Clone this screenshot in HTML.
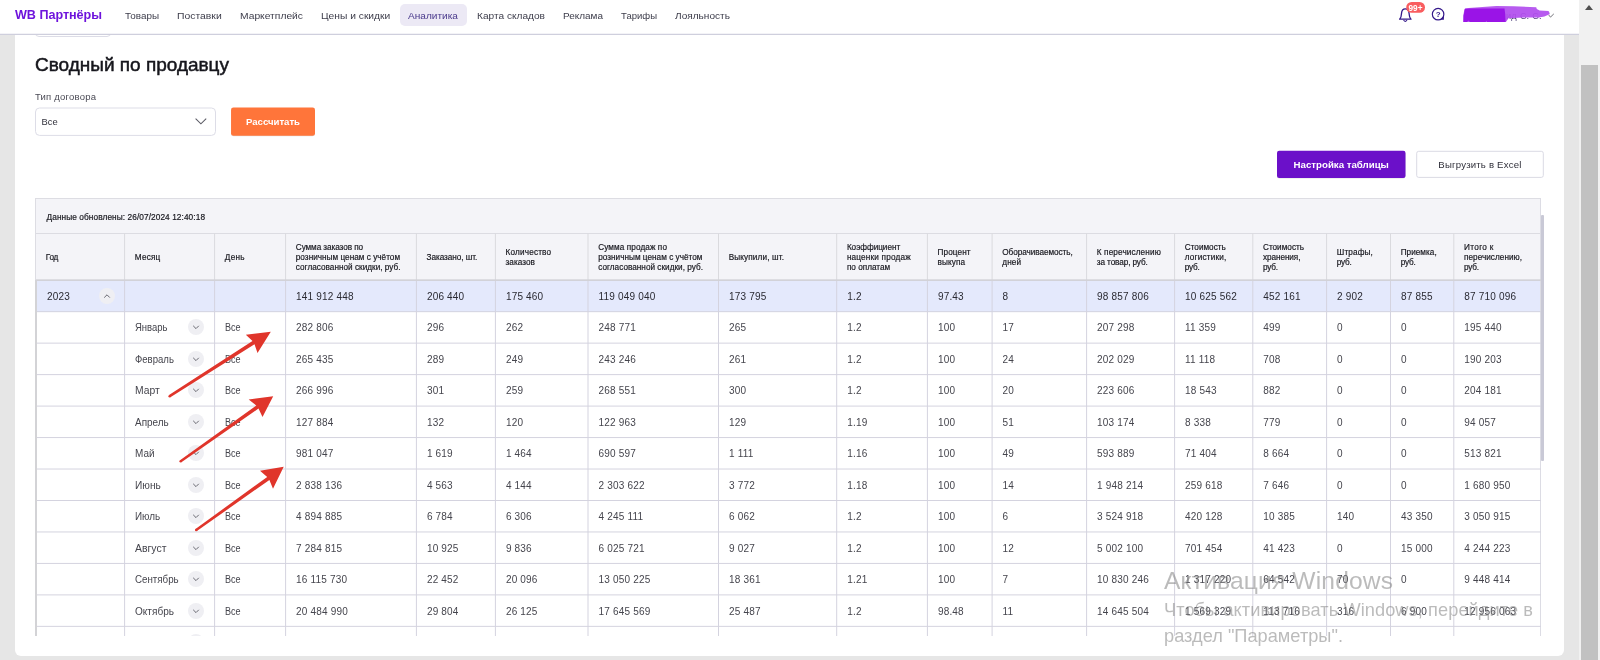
<!DOCTYPE html>
<html><head><meta charset="utf-8"><title>WB</title>
<style>
*{box-sizing:border-box;margin:0;padding:0}
html,body{width:1600px;height:660px;overflow:hidden;background:#e6e6e6;font-family:"Liberation Sans",sans-serif;}
.abs{position:absolute}
#root{position:absolute;left:0;top:0;width:1600px;height:660px;overflow:hidden;will-change:transform}
#hdr{position:absolute;left:0;top:0;width:1579px;height:34px;background:#fff;z-index:5}
#card{position:absolute;left:15px;top:34px;width:1549px;height:621.5px;background:#fff;border-radius:0 0 6px 6px}
#sb{position:absolute;left:1579px;top:0;width:21px;height:660px;background:#f1f1f1}
#sb .thumb{position:absolute;left:2px;top:65px;width:17px;height:595px;background:#c1c1c1}
#sb .up{position:absolute;left:5.6px;top:5.3px;width:0;height:0;border-left:4.9px solid transparent;border-right:4.9px solid transparent;border-bottom:5.2px solid #505050}
.nav{position:absolute;top:9.9px;font-size:9.3px;color:#3c3c4a;white-space:nowrap;line-height:12px}
.logo{position:absolute;left:15px;top:7.5px;font-size:12.6px;font-weight:bold;color:#6e13dc;white-space:nowrap;line-height:15px}
.pill{position:absolute;left:400px;top:4px;width:67px;height:22px;border-radius:5px;background:#ece9f5}
h1{position:absolute;left:35px;top:52.5px;font-size:19px;font-weight:normal;color:#16161c;white-space:nowrap;line-height:24px;-webkit-text-stroke:0.5px #16161c}
.lbl{position:absolute;left:35px;top:91.4px;font-size:9.5px;color:#4a4a55;line-height:11px;white-space:nowrap}
.sel{position:absolute;left:35px;top:107.5px;width:181px;height:28.3px}
.sel span.v{position:absolute;left:6.6px;top:8.4px;font-size:9.4px;line-height:11px;color:#33333d}
.btn-o{position:absolute;left:231px;top:107.5px;width:84px;height:28.3px;color:#fff;font-weight:bold;font-size:9.6px;text-align:center;line-height:28.8px;white-space:nowrap}
.btn-p{position:absolute;left:1277px;top:150.8px;width:128.5px;height:27.1px;color:#fff;font-weight:bold;font-size:9.7px;text-align:center;line-height:27.6px;white-space:nowrap}
.btn-w{position:absolute;left:1416.2px;top:150.8px;width:127.5px;height:27.1px;color:#30303a;font-size:9.6px;text-align:center;line-height:27.1px;white-space:nowrap}
#tbl{position:absolute;left:0;top:0;width:1600px;height:635.5px;overflow:hidden}
.topbar{position:absolute;left:35px;top:198px;width:1506px;height:35.5px;background:#f4f4f8;border:1px solid #dddde3;border-bottom:none}
.topbar div{position:absolute;left:10.5px;top:12.5px;font-size:8.3px;line-height:10px;color:#17171e;-webkit-text-stroke:0.18px #17171e;white-space:nowrap}
.thead{position:absolute;left:35px;top:233px;width:1506px;height:46.3px;background:#f4f4f8;border-top:1px solid #dcdce2;border-left:1px solid #dddde3;border-bottom:none}
.th{position:absolute;font-size:8.2px;line-height:10px;color:#17171e;-webkit-text-stroke:0.18px #17171e;white-space:nowrap}
.vl{position:absolute;width:1px;background:#d6d6e4}
.hl{position:absolute;height:1px;left:37px;width:1504px;background:#d6d6e4}
.c{position:absolute;font-size:10px;letter-spacing:0.19px;line-height:12px;color:#45454d;white-space:nowrap}
.c.b{color:#2a2a32}
.c.m{letter-spacing:0}
.sx{display:inline-block;transform-origin:0 50%}
.circ{position:absolute;width:16px;height:16px;border-radius:8px;background:#efeff3}
.circ svg{position:absolute;left:0;top:0}
</style></head><body><div id="root">

<div id="hdr">
<div class="logo"><span class="ls" style="letter-spacing:-0.030px">WB Партнёры</span></div>
<div class="pill"></div>
<div class="nav" style="left:125px;"><span class="sx" style="transform:scaleX(1.0630)">Товары</span></div>
<div class="nav" style="left:177px;"><span class="sx" style="transform:scaleX(1.1166)">Поставки</span></div>
<div class="nav" style="left:239.5px;"><span class="sx" style="transform:scaleX(1.1062)">Маркетплейс</span></div>
<div class="nav" style="left:320.7px;"><span class="sx" style="transform:scaleX(1.1030)">Цены и скидки</span></div>
<div class="nav" style="left:408px;color:#4a3a8c;"><span class="sx" style="transform:scaleX(1.0862)">Аналитика</span></div>
<div class="nav" style="left:477px;"><span class="sx" style="transform:scaleX(1.0894)">Карта складов</span></div>
<div class="nav" style="left:563px;"><span class="sx" style="transform:scaleX(1.0725)">Реклама</span></div>
<div class="nav" style="left:621px;"><span class="sx" style="transform:scaleX(1.0245)">Тарифы</span></div>
<div class="nav" style="left:675px;"><span class="sx" style="transform:scaleX(1.0861)">Лояльность</span></div>
<svg class="abs" style="left:1395px;top:0" width="184" height="34" viewBox="1395 0 184 34">
<path d="M1399.6 19.2 C1401.4 17.6 1401.4 15.5 1401.5 13.4 C1401.7 10.4 1403.2 8.9 1405.3 8.9 C1407.4 8.9 1408.9 10.4 1409.1 13.4 C1409.2 15.5 1409.2 17.6 1411 19.2 Z" fill="none" stroke="#34188a" stroke-width="1.3" stroke-linejoin="round"/>
<path d="M1403.9 20.5 Q1405.3 22.3 1406.7 20.5" fill="none" stroke="#34188a" stroke-width="1.2" stroke-linecap="round"/>
<rect x="1406.2" y="1.9" width="18.8" height="10.9" rx="5.4" fill="#f95d5f"/>
<text x="1408.5" y="10.6" font-family="Liberation Sans, sans-serif" font-weight="bold" font-size="8.8" fill="#fff" textLength="14" lengthAdjust="spacingAndGlyphs">99+</text>
<circle cx="1438.1" cy="14.2" r="5.75" fill="none" stroke="#34188a" stroke-width="1.2"/>
<path d="M1443.9 19.8 L1443.9 16.2 L1440.3 19.8 Z" fill="#34188a"/>
<text x="1438.2" y="17.2" font-family="Liberation Sans, sans-serif" font-weight="bold" font-size="8" fill="#34188a" text-anchor="middle">?</text>
<g font-family="Liberation Sans, sans-serif" font-size="9.2" fill="#4a3d78"><text x="1516.6" y="18.9" text-anchor="end">ид</text><text x="1519.9" y="18.9">С.</text><text x="1532.3" y="18.9">С.</text></g>
<path d="M1463.3 21.9 L1463.3 15.8 L1464.3 9.6 L1465.3 8.2 L1479 7.2 L1496.3 6.1 L1513.5 6.3 L1536.2 7.2 L1536.8 8.9 L1539.6 10.6 L1548.5 10.9 L1549.6 13 L1549.6 14.2 L1544.4 16.6 L1538.9 17.6 L1524 17.4 L1508.5 18.2 L1507 20.5 L1505.9 21.9 Z" fill="#b24fee" fill-opacity="0.93"/>
<path d="M1463.4 21.9 L1463.6 15.5 L1465 9 L1470 8.6 L1504.5 8.6 L1505.2 14 L1505.6 21.9 L1487 21.9 L1486.4 20.8 L1485.6 21.9 L1470 22 L1468.5 20.4 L1467 22 Z" fill="#9a14e7"/>
<path d="M1548.8 15.1 L1550.5 17.1 L1553.8 13.9" fill="none" stroke="#6a6a72" stroke-width="0.95"/>
</svg>
<svg class="abs" style="left:0;top:30px" width="1579" height="6"><line x1="0" y1="4.4" x2="1579" y2="4.4" stroke="#cfcfdd" stroke-width="1.25"/></svg>
</div>
<div id="card"></div>
<div id="sb"><div class="up"></div><div class="thumb"></div></div>
<div class="abs" style="left:35px;top:20px;width:76px;height:17px;border:1px solid #dcdce6;border-radius:4px;z-index:1"></div>
<svg class="abs" style="left:0;top:100px" width="1579" height="90" viewBox="0 100 1579 90"><rect x="35.5" y="108" width="180" height="27.4" rx="4" fill="#fff" stroke="#dddde7" stroke-width="1"/><rect x="231.05" y="108.1" width="83.95" height="28.1" rx="2.4" fill="#000" fill-opacity="0.13"/><rect x="231.05" y="107.5" width="83.95" height="28.3" rx="2.4" fill="#ff753a"/><rect x="1277" y="151.3" width="128.5" height="27.1" rx="2.2" fill="#000" fill-opacity="0.13"/><rect x="1277" y="150.8" width="128.5" height="27.1" rx="2.2" fill="#6b10c9"/><rect x="1416.7" y="151.3" width="126.6" height="26.1" rx="2" fill="#fff" stroke="#dadae4" stroke-width="1"/></svg>
<h1><span class="ls" style="letter-spacing:-0.009px">Сводный по продавцу</span></h1>
<div class="lbl"><span class="ls" style="letter-spacing:0.214px">Тип договора</span></div>
<div class="sel"><span class="v">Все</span><svg class="abs" style="left:159px;top:9.6px" width="14" height="9" viewBox="0 0 14 9"><path d="M1.6 1.6 L6.9 6.8 L12.2 1.6" fill="none" stroke="#5a5a64" stroke-width="1.05"/></svg></div>
<div class="btn-o"><span class="ls" style="letter-spacing:-0.016px">Рассчитать</span></div>
<div class="btn-p"><span class="ls" style="letter-spacing:-0.010px">Настройка таблицы</span></div>
<div class="btn-w"><span class="ls" style="letter-spacing:0.196px">Выгрузить в Excel</span></div>
<div id="tbl">
<div class="topbar"><div><span class="ls" style="letter-spacing:0.075px">Данные обновлены: 26/07/2024 12:40:18</span></div></div>
<div class="thead"></div>
<div class="abs" style="left:37px;top:280.5px;width:1504px;height:31.17px;background:#e4e9fc"></div>
<div class="abs" style="left:35px;top:280px;width:2px;height:360px;background:#d3d3d6"></div>
<svg class="abs" style="left:0;top:0" width="1600" height="660"><line x1="124.6" y1="233.5" x2="124.6" y2="280" stroke="#dadade" stroke-width="1"/><line x1="124.6" y1="281" x2="124.6" y2="640" stroke="#d4d3df" stroke-width="1"/><line x1="214.6" y1="233.5" x2="214.6" y2="280" stroke="#dadade" stroke-width="1"/><line x1="214.6" y1="281" x2="214.6" y2="640" stroke="#d4d3df" stroke-width="1"/><line x1="285.6" y1="233.5" x2="285.6" y2="280" stroke="#dadade" stroke-width="1"/><line x1="285.6" y1="281" x2="285.6" y2="640" stroke="#d4d3df" stroke-width="1"/><line x1="416.4" y1="233.5" x2="416.4" y2="280" stroke="#dadade" stroke-width="1"/><line x1="416.4" y1="281" x2="416.4" y2="640" stroke="#d4d3df" stroke-width="1"/><line x1="495.4" y1="233.5" x2="495.4" y2="280" stroke="#dadade" stroke-width="1"/><line x1="495.4" y1="281" x2="495.4" y2="640" stroke="#d4d3df" stroke-width="1"/><line x1="588" y1="233.5" x2="588" y2="280" stroke="#dadade" stroke-width="1"/><line x1="588" y1="281" x2="588" y2="640" stroke="#d4d3df" stroke-width="1"/><line x1="718.5" y1="233.5" x2="718.5" y2="280" stroke="#dadade" stroke-width="1"/><line x1="718.5" y1="281" x2="718.5" y2="640" stroke="#d4d3df" stroke-width="1"/><line x1="836.7" y1="233.5" x2="836.7" y2="280" stroke="#dadade" stroke-width="1"/><line x1="836.7" y1="281" x2="836.7" y2="640" stroke="#d4d3df" stroke-width="1"/><line x1="927.4" y1="233.5" x2="927.4" y2="280" stroke="#dadade" stroke-width="1"/><line x1="927.4" y1="281" x2="927.4" y2="640" stroke="#d4d3df" stroke-width="1"/><line x1="992.1" y1="233.5" x2="992.1" y2="280" stroke="#dadade" stroke-width="1"/><line x1="992.1" y1="281" x2="992.1" y2="640" stroke="#d4d3df" stroke-width="1"/><line x1="1086.6" y1="233.5" x2="1086.6" y2="280" stroke="#dadade" stroke-width="1"/><line x1="1086.6" y1="281" x2="1086.6" y2="640" stroke="#d4d3df" stroke-width="1"/><line x1="1174.6" y1="233.5" x2="1174.6" y2="280" stroke="#dadade" stroke-width="1"/><line x1="1174.6" y1="281" x2="1174.6" y2="640" stroke="#d4d3df" stroke-width="1"/><line x1="1252.8" y1="233.5" x2="1252.8" y2="280" stroke="#dadade" stroke-width="1"/><line x1="1252.8" y1="281" x2="1252.8" y2="640" stroke="#d4d3df" stroke-width="1"/><line x1="1326.6" y1="233.5" x2="1326.6" y2="280" stroke="#dadade" stroke-width="1"/><line x1="1326.6" y1="281" x2="1326.6" y2="640" stroke="#d4d3df" stroke-width="1"/><line x1="1390.5" y1="233.5" x2="1390.5" y2="280" stroke="#dadade" stroke-width="1"/><line x1="1390.5" y1="281" x2="1390.5" y2="640" stroke="#d4d3df" stroke-width="1"/><line x1="1453.8" y1="233.5" x2="1453.8" y2="280" stroke="#dadade" stroke-width="1"/><line x1="1453.8" y1="281" x2="1453.8" y2="640" stroke="#d4d3df" stroke-width="1"/><line x1="1540.5" y1="198" x2="1540.5" y2="640" stroke="#dcdce4" stroke-width="1"/><line x1="37" y1="311.67" x2="1541" y2="311.67" stroke="#d4d3df" stroke-width="1"/><line x1="37" y1="343.14" x2="1541" y2="343.14" stroke="#d4d3df" stroke-width="1"/><line x1="37" y1="374.61" x2="1541" y2="374.61" stroke="#d4d3df" stroke-width="1"/><line x1="37" y1="406.08" x2="1541" y2="406.08" stroke="#d4d3df" stroke-width="1"/><line x1="37" y1="437.55" x2="1541" y2="437.55" stroke="#d4d3df" stroke-width="1"/><line x1="37" y1="469.02" x2="1541" y2="469.02" stroke="#d4d3df" stroke-width="1"/><line x1="37" y1="500.49" x2="1541" y2="500.49" stroke="#d4d3df" stroke-width="1"/><line x1="37" y1="531.96" x2="1541" y2="531.96" stroke="#d4d3df" stroke-width="1"/><line x1="37" y1="563.43" x2="1541" y2="563.43" stroke="#d4d3df" stroke-width="1"/><line x1="37" y1="594.9" x2="1541" y2="594.9" stroke="#d4d3df" stroke-width="1"/><line x1="37" y1="626.37" x2="1541" y2="626.37" stroke="#d4d3df" stroke-width="1"/><line x1="35" y1="280.1" x2="1541" y2="280.1" stroke="#d2d2d8" stroke-width="1.7"/></svg>
<div class="th" style="left:45.8px;top:252.7px"><span class="ls" style="letter-spacing:-0.273px">Год</span></div>
<div class="th" style="left:134.8px;top:252.7px"><span class="ls" style="letter-spacing:0.203px">Месяц</span></div>
<div class="th" style="left:224.8px;top:252.7px"><span class="ls" style="letter-spacing:0.286px">День</span></div>
<div class="th" style="left:295.8px;top:242.7px"><span class="ls" style="letter-spacing:-0.074px">Сумма заказов по</span><br><span class="ls" style="letter-spacing:0.024px">розничным ценам с учётом</span><br><span class="ls" style="letter-spacing:0.021px">согласованной скидки, руб.</span></div>
<div class="th" style="left:426.6px;top:252.7px"><span class="ls" style="letter-spacing:-0.049px">Заказано, шт.</span></div>
<div class="th" style="left:505.6px;top:247.7px"><span class="ls" style="letter-spacing:0.170px">Количество</span><br><span class="ls" style="letter-spacing:0.023px">заказов</span></div>
<div class="th" style="left:598.2px;top:242.7px"><span class="ls" style="letter-spacing:0.094px">Сумма продаж по</span><br><span class="ls" style="letter-spacing:0.024px">розничным ценам с учётом</span><br><span class="ls" style="letter-spacing:0.021px">согласованной скидки, руб.</span></div>
<div class="th" style="left:728.7px;top:252.7px"><span class="ls" style="letter-spacing:0.128px">Выкупили, шт.</span></div>
<div class="th" style="left:846.9px;top:242.7px"><span class="ls" style="letter-spacing:-0.039px">Коэффициент</span><br><span class="ls" style="letter-spacing:0.184px">наценки продаж</span><br><span class="ls" style="letter-spacing:0.000px">по оплатам</span></div>
<div class="th" style="left:937.6px;top:247.7px"><span class="ls" style="letter-spacing:0.096px">Процент</span><br><span class="ls" style="letter-spacing:0.100px">выкупа</span></div>
<div class="th" style="left:1002.3px;top:247.7px"><span class="ls" style="letter-spacing:-0.054px">Оборачиваемость,</span><br><span class="ls" style="letter-spacing:0.104px">дней</span></div>
<div class="th" style="left:1096.8px;top:247.7px"><span class="ls" style="letter-spacing:0.125px">К перечислению</span><br><span class="ls" style="letter-spacing:-0.102px">за товар, руб.</span></div>
<div class="th" style="left:1184.8px;top:242.7px"><span class="ls" style="letter-spacing:0.000px">Стоимость</span><br><span class="ls" style="letter-spacing:0.173px">логистики,</span><br><span class="ls" style="letter-spacing:-0.208px">руб.</span></div>
<div class="th" style="left:1263px;top:242.7px"><span class="ls" style="letter-spacing:0.000px">Стоимость</span><br><span class="ls" style="letter-spacing:-0.074px">хранения,</span><br><span class="ls" style="letter-spacing:-0.208px">руб.</span></div>
<div class="th" style="left:1336.8px;top:247.7px"><span class="ls" style="letter-spacing:0.122px">Штрафы,</span><br><span class="ls" style="letter-spacing:-0.208px">руб.</span></div>
<div class="th" style="left:1400.7px;top:247.7px"><span class="ls" style="letter-spacing:0.029px">Приемка,</span><br><span class="ls" style="letter-spacing:-0.208px">руб.</span></div>
<div class="th" style="left:1464px;top:242.7px"><span class="ls" style="letter-spacing:0.345px">Итого к</span><br><span class="ls" style="letter-spacing:0.033px">перечислению,</span><br><span class="ls" style="letter-spacing:-0.208px">руб.</span></div>
<div class="c b" style="left:46.9px;top:290.835px">2023</div>
<div class="c b" style="left:296.1px;top:290.835px">141 912 448</div>
<div class="c b" style="left:426.9px;top:290.835px">206 440</div>
<div class="c b" style="left:505.9px;top:290.835px">175 460</div>
<div class="c b" style="left:598.5px;top:290.835px">119 049 040</div>
<div class="c b" style="left:729px;top:290.835px">173 795</div>
<div class="c b" style="left:847.2px;top:290.835px">1.2</div>
<div class="c b" style="left:937.9px;top:290.835px">97.43</div>
<div class="c b" style="left:1002.6px;top:290.835px">8</div>
<div class="c b" style="left:1097.1px;top:290.835px">98 857 806</div>
<div class="c b" style="left:1185.1px;top:290.835px">10 625 562</div>
<div class="c b" style="left:1263.3px;top:290.835px">452 161</div>
<div class="c b" style="left:1337.1px;top:290.835px">2 902</div>
<div class="c b" style="left:1401px;top:290.835px">87 855</div>
<div class="c b" style="left:1464.3px;top:290.835px">87 710 096</div>
<div class="circ" style="left:98.9px;top:287.935px"><svg width="16" height="16"><path d="M5.2 9.6 L8 6.8 L10.8 9.6" fill="none" stroke="#62626a" stroke-width="0.95"/></svg></div>
<div class="c m" style="left:135.1px;top:322.305px"><span class="sx" style="transform:scaleX(0.9480)">Январь</span></div>
<div class="c m" style="left:225.1px;top:322.305px"><span class="sx" style="transform:scaleX(0.9052)">Все</span></div>
<div class="c" style="left:296.1px;top:322.305px">282 806</div>
<div class="c" style="left:426.9px;top:322.305px">296</div>
<div class="c" style="left:505.9px;top:322.305px">262</div>
<div class="c" style="left:598.5px;top:322.305px">248 771</div>
<div class="c" style="left:729px;top:322.305px">265</div>
<div class="c" style="left:847.2px;top:322.305px">1.2</div>
<div class="c" style="left:937.9px;top:322.305px">100</div>
<div class="c" style="left:1002.6px;top:322.305px">17</div>
<div class="c" style="left:1097.1px;top:322.305px">207 298</div>
<div class="c" style="left:1185.1px;top:322.305px">11 359</div>
<div class="c" style="left:1263.3px;top:322.305px">499</div>
<div class="c" style="left:1337.1px;top:322.305px">0</div>
<div class="c" style="left:1401px;top:322.305px">0</div>
<div class="c" style="left:1464.3px;top:322.305px">195 440</div>
<div class="circ" style="left:187.9px;top:319.405px"><svg width="16" height="16"><path d="M5.2 6.8 L8 9.6 L10.8 6.8" fill="none" stroke="#62626a" stroke-width="0.95"/></svg></div>
<div class="c m" style="left:135.1px;top:353.775px"><span class="sx" style="transform:scaleX(0.9568)">Февраль</span></div>
<div class="c m" style="left:225.1px;top:353.775px"><span class="sx" style="transform:scaleX(0.9052)">Все</span></div>
<div class="c" style="left:296.1px;top:353.775px">265 435</div>
<div class="c" style="left:426.9px;top:353.775px">289</div>
<div class="c" style="left:505.9px;top:353.775px">249</div>
<div class="c" style="left:598.5px;top:353.775px">243 246</div>
<div class="c" style="left:729px;top:353.775px">261</div>
<div class="c" style="left:847.2px;top:353.775px">1.2</div>
<div class="c" style="left:937.9px;top:353.775px">100</div>
<div class="c" style="left:1002.6px;top:353.775px">24</div>
<div class="c" style="left:1097.1px;top:353.775px">202 029</div>
<div class="c" style="left:1185.1px;top:353.775px">11 118</div>
<div class="c" style="left:1263.3px;top:353.775px">708</div>
<div class="c" style="left:1337.1px;top:353.775px">0</div>
<div class="c" style="left:1401px;top:353.775px">0</div>
<div class="c" style="left:1464.3px;top:353.775px">190 203</div>
<div class="circ" style="left:187.9px;top:350.875px"><svg width="16" height="16"><path d="M5.2 6.8 L8 9.6 L10.8 6.8" fill="none" stroke="#62626a" stroke-width="0.95"/></svg></div>
<div class="c m" style="left:135.1px;top:385.245px"><span class="sx" style="transform:scaleX(1.0319)">Март</span></div>
<div class="c m" style="left:225.1px;top:385.245px"><span class="sx" style="transform:scaleX(0.9052)">Все</span></div>
<div class="c" style="left:296.1px;top:385.245px">266 996</div>
<div class="c" style="left:426.9px;top:385.245px">301</div>
<div class="c" style="left:505.9px;top:385.245px">259</div>
<div class="c" style="left:598.5px;top:385.245px">268 551</div>
<div class="c" style="left:729px;top:385.245px">300</div>
<div class="c" style="left:847.2px;top:385.245px">1.2</div>
<div class="c" style="left:937.9px;top:385.245px">100</div>
<div class="c" style="left:1002.6px;top:385.245px">20</div>
<div class="c" style="left:1097.1px;top:385.245px">223 606</div>
<div class="c" style="left:1185.1px;top:385.245px">18 543</div>
<div class="c" style="left:1263.3px;top:385.245px">882</div>
<div class="c" style="left:1337.1px;top:385.245px">0</div>
<div class="c" style="left:1401px;top:385.245px">0</div>
<div class="c" style="left:1464.3px;top:385.245px">204 181</div>
<div class="circ" style="left:187.9px;top:382.345px"><svg width="16" height="16"><path d="M5.2 6.8 L8 9.6 L10.8 6.8" fill="none" stroke="#62626a" stroke-width="0.95"/></svg></div>
<div class="c m" style="left:135.1px;top:416.715px"><span class="sx" style="transform:scaleX(0.9949)">Апрель</span></div>
<div class="c m" style="left:225.1px;top:416.715px"><span class="sx" style="transform:scaleX(0.9052)">Все</span></div>
<div class="c" style="left:296.1px;top:416.715px">127 884</div>
<div class="c" style="left:426.9px;top:416.715px">132</div>
<div class="c" style="left:505.9px;top:416.715px">120</div>
<div class="c" style="left:598.5px;top:416.715px">122 963</div>
<div class="c" style="left:729px;top:416.715px">129</div>
<div class="c" style="left:847.2px;top:416.715px">1.19</div>
<div class="c" style="left:937.9px;top:416.715px">100</div>
<div class="c" style="left:1002.6px;top:416.715px">51</div>
<div class="c" style="left:1097.1px;top:416.715px">103 174</div>
<div class="c" style="left:1185.1px;top:416.715px">8 338</div>
<div class="c" style="left:1263.3px;top:416.715px">779</div>
<div class="c" style="left:1337.1px;top:416.715px">0</div>
<div class="c" style="left:1401px;top:416.715px">0</div>
<div class="c" style="left:1464.3px;top:416.715px">94 057</div>
<div class="circ" style="left:187.9px;top:413.815px"><svg width="16" height="16"><path d="M5.2 6.8 L8 9.6 L10.8 6.8" fill="none" stroke="#62626a" stroke-width="0.95"/></svg></div>
<div class="c m" style="left:135.1px;top:448.185px"><span class="sx" style="transform:scaleX(0.9952)">Май</span></div>
<div class="c m" style="left:225.1px;top:448.185px"><span class="sx" style="transform:scaleX(0.9052)">Все</span></div>
<div class="c" style="left:296.1px;top:448.185px">981 047</div>
<div class="c" style="left:426.9px;top:448.185px">1 619</div>
<div class="c" style="left:505.9px;top:448.185px">1 464</div>
<div class="c" style="left:598.5px;top:448.185px">690 597</div>
<div class="c" style="left:729px;top:448.185px">1 111</div>
<div class="c" style="left:847.2px;top:448.185px">1.16</div>
<div class="c" style="left:937.9px;top:448.185px">100</div>
<div class="c" style="left:1002.6px;top:448.185px">49</div>
<div class="c" style="left:1097.1px;top:448.185px">593 889</div>
<div class="c" style="left:1185.1px;top:448.185px">71 404</div>
<div class="c" style="left:1263.3px;top:448.185px">8 664</div>
<div class="c" style="left:1337.1px;top:448.185px">0</div>
<div class="c" style="left:1401px;top:448.185px">0</div>
<div class="c" style="left:1464.3px;top:448.185px">513 821</div>
<div class="circ" style="left:187.9px;top:445.285px"><svg width="16" height="16"><path d="M5.2 6.8 L8 9.6 L10.8 6.8" fill="none" stroke="#62626a" stroke-width="0.95"/></svg></div>
<div class="c m" style="left:135.1px;top:479.655px"><span class="sx" style="transform:scaleX(1.0129)">Июнь</span></div>
<div class="c m" style="left:225.1px;top:479.655px"><span class="sx" style="transform:scaleX(0.9052)">Все</span></div>
<div class="c" style="left:296.1px;top:479.655px">2 838 136</div>
<div class="c" style="left:426.9px;top:479.655px">4 563</div>
<div class="c" style="left:505.9px;top:479.655px">4 144</div>
<div class="c" style="left:598.5px;top:479.655px">2 303 622</div>
<div class="c" style="left:729px;top:479.655px">3 772</div>
<div class="c" style="left:847.2px;top:479.655px">1.18</div>
<div class="c" style="left:937.9px;top:479.655px">100</div>
<div class="c" style="left:1002.6px;top:479.655px">14</div>
<div class="c" style="left:1097.1px;top:479.655px">1 948 214</div>
<div class="c" style="left:1185.1px;top:479.655px">259 618</div>
<div class="c" style="left:1263.3px;top:479.655px">7 646</div>
<div class="c" style="left:1337.1px;top:479.655px">0</div>
<div class="c" style="left:1401px;top:479.655px">0</div>
<div class="c" style="left:1464.3px;top:479.655px">1 680 950</div>
<div class="circ" style="left:187.9px;top:476.755px"><svg width="16" height="16"><path d="M5.2 6.8 L8 9.6 L10.8 6.8" fill="none" stroke="#62626a" stroke-width="0.95"/></svg></div>
<div class="c m" style="left:135.1px;top:511.125px"><span class="sx" style="transform:scaleX(0.9896)">Июль</span></div>
<div class="c m" style="left:225.1px;top:511.125px"><span class="sx" style="transform:scaleX(0.9052)">Все</span></div>
<div class="c" style="left:296.1px;top:511.125px">4 894 885</div>
<div class="c" style="left:426.9px;top:511.125px">6 784</div>
<div class="c" style="left:505.9px;top:511.125px">6 306</div>
<div class="c" style="left:598.5px;top:511.125px">4 245 111</div>
<div class="c" style="left:729px;top:511.125px">6 062</div>
<div class="c" style="left:847.2px;top:511.125px">1.2</div>
<div class="c" style="left:937.9px;top:511.125px">100</div>
<div class="c" style="left:1002.6px;top:511.125px">6</div>
<div class="c" style="left:1097.1px;top:511.125px">3 524 918</div>
<div class="c" style="left:1185.1px;top:511.125px">420 128</div>
<div class="c" style="left:1263.3px;top:511.125px">10 385</div>
<div class="c" style="left:1337.1px;top:511.125px">140</div>
<div class="c" style="left:1401px;top:511.125px">43 350</div>
<div class="c" style="left:1464.3px;top:511.125px">3 050 915</div>
<div class="circ" style="left:187.9px;top:508.225px"><svg width="16" height="16"><path d="M5.2 6.8 L8 9.6 L10.8 6.8" fill="none" stroke="#62626a" stroke-width="0.95"/></svg></div>
<div class="c m" style="left:135.1px;top:542.595px"><span class="sx" style="transform:scaleX(1.0462)">Август</span></div>
<div class="c m" style="left:225.1px;top:542.595px"><span class="sx" style="transform:scaleX(0.9052)">Все</span></div>
<div class="c" style="left:296.1px;top:542.595px">7 284 815</div>
<div class="c" style="left:426.9px;top:542.595px">10 925</div>
<div class="c" style="left:505.9px;top:542.595px">9 836</div>
<div class="c" style="left:598.5px;top:542.595px">6 025 721</div>
<div class="c" style="left:729px;top:542.595px">9 027</div>
<div class="c" style="left:847.2px;top:542.595px">1.2</div>
<div class="c" style="left:937.9px;top:542.595px">100</div>
<div class="c" style="left:1002.6px;top:542.595px">12</div>
<div class="c" style="left:1097.1px;top:542.595px">5 002 100</div>
<div class="c" style="left:1185.1px;top:542.595px">701 454</div>
<div class="c" style="left:1263.3px;top:542.595px">41 423</div>
<div class="c" style="left:1337.1px;top:542.595px">0</div>
<div class="c" style="left:1401px;top:542.595px">15 000</div>
<div class="c" style="left:1464.3px;top:542.595px">4 244 223</div>
<div class="circ" style="left:187.9px;top:539.695px"><svg width="16" height="16"><path d="M5.2 6.8 L8 9.6 L10.8 6.8" fill="none" stroke="#62626a" stroke-width="0.95"/></svg></div>
<div class="c m" style="left:135.1px;top:574.065px"><span class="sx" style="transform:scaleX(0.9752)">Сентябрь</span></div>
<div class="c m" style="left:225.1px;top:574.065px"><span class="sx" style="transform:scaleX(0.9052)">Все</span></div>
<div class="c" style="left:296.1px;top:574.065px">16 115 730</div>
<div class="c" style="left:426.9px;top:574.065px">22 452</div>
<div class="c" style="left:505.9px;top:574.065px">20 096</div>
<div class="c" style="left:598.5px;top:574.065px">13 050 225</div>
<div class="c" style="left:729px;top:574.065px">18 361</div>
<div class="c" style="left:847.2px;top:574.065px">1.21</div>
<div class="c" style="left:937.9px;top:574.065px">100</div>
<div class="c" style="left:1002.6px;top:574.065px">7</div>
<div class="c" style="left:1097.1px;top:574.065px">10 830 246</div>
<div class="c" style="left:1185.1px;top:574.065px">1 317 220</div>
<div class="c" style="left:1263.3px;top:574.065px">64 542</div>
<div class="c" style="left:1337.1px;top:574.065px">70</div>
<div class="c" style="left:1401px;top:574.065px">0</div>
<div class="c" style="left:1464.3px;top:574.065px">9 448 414</div>
<div class="circ" style="left:187.9px;top:571.165px"><svg width="16" height="16"><path d="M5.2 6.8 L8 9.6 L10.8 6.8" fill="none" stroke="#62626a" stroke-width="0.95"/></svg></div>
<div class="c m" style="left:135.1px;top:605.535px"><span class="sx" style="transform:scaleX(1.0060)">Октябрь</span></div>
<div class="c m" style="left:225.1px;top:605.535px"><span class="sx" style="transform:scaleX(0.9052)">Все</span></div>
<div class="c" style="left:296.1px;top:605.535px">20 484 990</div>
<div class="c" style="left:426.9px;top:605.535px">29 804</div>
<div class="c" style="left:505.9px;top:605.535px">26 125</div>
<div class="c" style="left:598.5px;top:605.535px">17 645 569</div>
<div class="c" style="left:729px;top:605.535px">25 487</div>
<div class="c" style="left:847.2px;top:605.535px">1.2</div>
<div class="c" style="left:937.9px;top:605.535px">98.48</div>
<div class="c" style="left:1002.6px;top:605.535px">11</div>
<div class="c" style="left:1097.1px;top:605.535px">14 645 504</div>
<div class="c" style="left:1185.1px;top:605.535px">1 569 329</div>
<div class="c" style="left:1263.3px;top:605.535px">113 716</div>
<div class="c" style="left:1337.1px;top:605.535px">316</div>
<div class="c" style="left:1401px;top:605.535px">6 900</div>
<div class="c" style="left:1464.3px;top:605.535px">12 956 063</div>
<div class="circ" style="left:187.9px;top:602.635px"><svg width="16" height="16"><path d="M5.2 6.8 L8 9.6 L10.8 6.8" fill="none" stroke="#62626a" stroke-width="0.95"/></svg></div>
<div class="circ" style="left:187.9px;top:634.105px"><svg width="16" height="16"><path d="M5.2 6.8 L8 9.6 L10.8 6.8" fill="none" stroke="#62626a" stroke-width="0.95"/></svg></div>
</div>
<div class="abs" style="left:1540.5px;top:215px;width:3.5px;height:246px;background:#c9c9d6;border-radius:1px"></div>
<svg class="abs" style="left:0;top:0;z-index:4" width="1600" height="660">
<path d="M170.4 397.3 L254.5 344.2 L257.5 353.0 L270.8 331.7 L245.8 334.7 L252.5 341.1 L169.0 395.1 Z" fill="#e0352b"/><circle cx="169.7" cy="396.2" r="1.25" fill="#e0352b"/>
<path d="M181.4 462.2 L258.5 408.5 L262.5 417.0 L273.2 396.2 L248.7 399.5 L256.3 405.5 L180.0 460.2 Z" fill="#e0352b"/><circle cx="180.7" cy="461.2" r="1.25" fill="#e0352b"/>
<path d="M196.9 531.0 L269.4 479.9 L273.0 488.7 L283.7 466.7 L260.0 470.7 L267.2 476.9 L195.5 529.0 Z" fill="#e0352b"/><circle cx="196.2" cy="530.0" r="1.25" fill="#e0352b"/>
</svg>
<div class="abs" style="left:1164px;top:567px;font-size:24.6px;line-height:28px;color:rgba(125,125,125,0.52);white-space:nowrap;z-index:6"><span class="ls" style="letter-spacing:0.146px">Активация Windows</span></div>
<div class="abs" style="left:1164px;top:598px;font-size:18.2px;line-height:25.5px;color:rgba(125,125,125,0.52);white-space:nowrap;z-index:6"><span class="ls" style="letter-spacing:0.086px">Чтобы активировать Windows, перейдите в</span><br><span class="ls" style="letter-spacing:0.018px">раздел "Параметры".</span></div>
</div></body></html>
